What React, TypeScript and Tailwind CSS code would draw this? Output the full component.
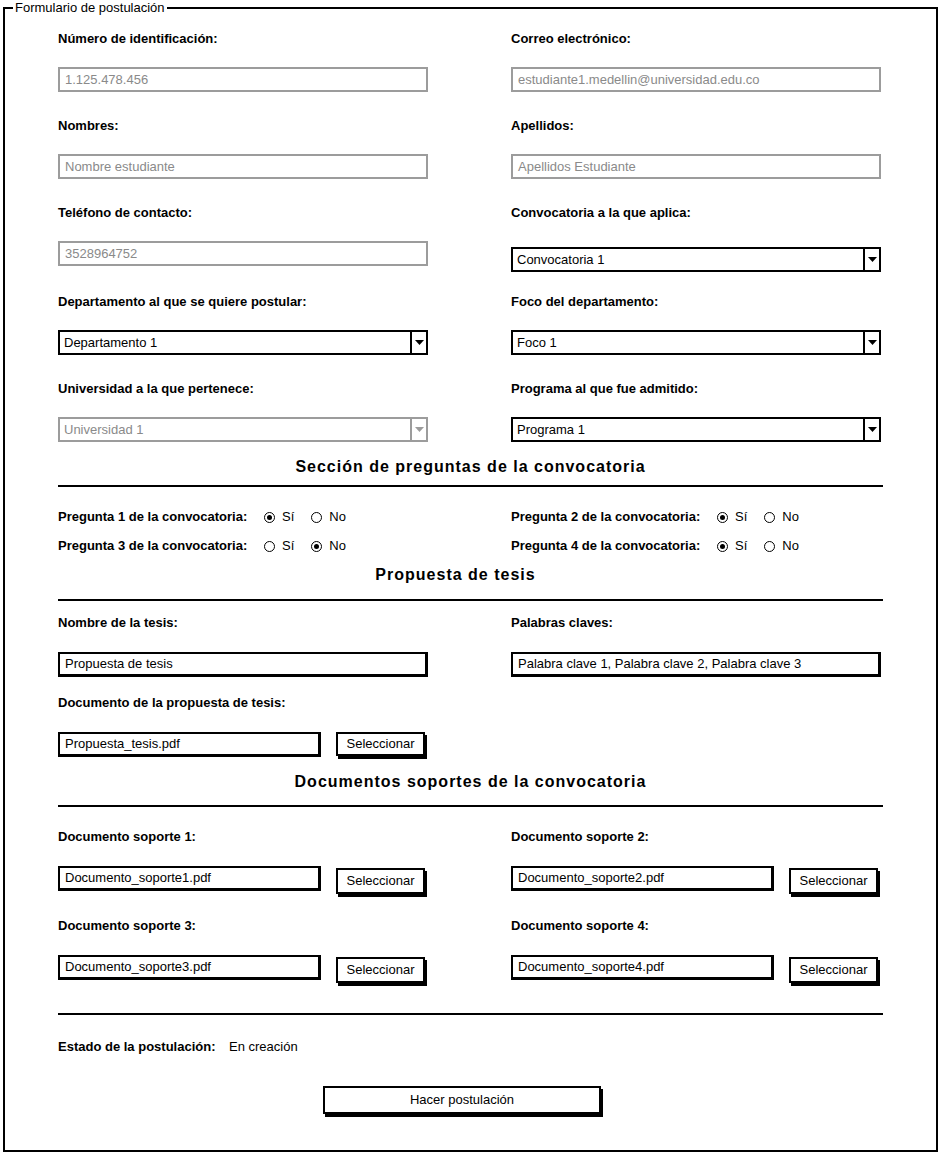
import type { ReactNode } from 'react';

const font = { fontFamily: '"Liberation Sans", Arial, sans-serif' };

function Label({ children }: { children: ReactNode }) {
  return <div className="h-[16px] leading-[16px] text-[13px] font-bold text-black">{children}</div>;
}

function TextBox({ value, disabled, className = '' }: { value: string; disabled?: boolean; className?: string }) {
  return (
    <div
      className={`h-[25px] flex items-center px-[5px] text-[13px] bg-white ${
        disabled ? 'border-2 border-[#9c9c9c] text-[#8a8a8a]' : 'border-2 border-r-[3px] border-b-[3px] border-black text-black'
      } ${className}`}
    >
      {value}
    </div>
  );
}

function Select({ value, disabled, className = '' }: { value: string; disabled?: boolean; className?: string }) {
  const c = disabled ? 'border-[#9c9c9c]' : 'border-black';
  return (
    <div className={`h-[25px] flex border-2 bg-white ${c} ${className}`}>
      <div className={`flex-1 flex items-center px-[4px] text-[13px] ${disabled ? 'text-[#8a8a8a]' : 'text-black'}`}>{value}</div>
      <div className={`w-[16px] border-l-2 ${c} flex items-center justify-center`}>
        <svg width="9" height="5" viewBox="0 0 9 5">
          <polygon points="0,0 9,0 4.5,5" fill={disabled ? '#9c9c9c' : '#000'} />
        </svg>
      </div>
    </div>
  );
}

function Button({ children, className = '' }: { children: ReactNode; className?: string }) {
  return (
    <div
      className={`flex items-center justify-center bg-white border-2 border-black text-[13px] text-black shadow-[2px_3px_0_#000] ${className}`}
    >
      {children}
    </div>
  );
}

function Radio({ checked, label }: { checked?: boolean; label: string }) {
  return (
    <div className="flex items-center">
      <div className="w-[11px] h-[11px] rounded-full border-[1.5px] border-black flex items-center justify-center">
        {checked && <div className="w-[5px] h-[5px] rounded-full bg-black" />}
      </div>
      <span className="ml-[7px] text-[13px] text-black">{label}</span>
    </div>
  );
}

function Question({ label, yes }: { label: string; yes: boolean }) {
  return (
    <div className="flex items-center h-[20px]">
      <div className="w-[206px] text-[13px] font-bold text-black">{label}</div>
      <Radio checked={yes} label="Sí" />
      <div className="w-[17px]" />
      <Radio checked={!yes} label="No" />
    </div>
  );
}

function Heading({ children, className = '' }: { children: ReactNode; className?: string }) {
  return (
    <div className={`h-[20px] leading-[20px] text-center text-[16px] font-bold tracking-[1px] text-black ${className}`}>
      {children}
    </div>
  );
}

function Rule({ className = '' }: { className?: string }) {
  return <div className={`h-[2px] bg-black ${className}`} />;
}

function FileField({ label, file, taller }: { label: string; file: string; taller?: boolean }) {
  return (
    <div>
      <Label>{label}</Label>
      <div className="mt-[21px] flex items-start">
        <TextBox value={file} className="w-[263px]" />
        <Button className={`ml-[15px] w-[89px] ${taller ? 'h-[26px] mt-[2px]' : 'h-[24px]'}`}>Seleccionar</Button>
      </div>
    </div>
  );
}

const row = 'grid grid-cols-[370px_370px] gap-x-[83px]';

export default function App() {
  return (
    <div className="w-[941px] h-[1155px] bg-white" style={font}>
      <fieldset className="ml-[3px] w-[935px] border-2 border-black px-[53px] pb-[36px]">
        <legend className="-ml-[45px] px-[2px] text-[13px] leading-[15px] text-black">Formulario de postulación</legend>

        <div className={`${row} mt-[16px]`}>
          <div>
            <Label>Número de identificación:</Label>
            <TextBox value="1.125.478.456" disabled className="mt-[20px]" />
          </div>
          <div>
            <Label>Correo electrónico:</Label>
            <TextBox value="estudiante1.medellin@universidad.edu.co" disabled className="mt-[20px]" />
          </div>
        </div>

        <div className={`${row} mt-[26px]`}>
          <div>
            <Label>Nombres:</Label>
            <TextBox value="Nombre estudiante" disabled className="mt-[20px]" />
          </div>
          <div>
            <Label>Apellidos:</Label>
            <TextBox value="Apellidos Estudiante" disabled className="mt-[20px]" />
          </div>
        </div>

        <div className={`${row} mt-[26px]`}>
          <div>
            <Label>Teléfono de contacto:</Label>
            <TextBox value="3528964752" disabled className="mt-[20px]" />
          </div>
          <div>
            <Label>Convocatoria a la que aplica:</Label>
            <Select value="Convocatoria 1" className="mt-[26px]" />
          </div>
        </div>

        <div className={`${row} mt-[22px]`}>
          <div>
            <Label>Departamento al que se quiere postular:</Label>
            <Select value="Departamento 1" className="mt-[20px]" />
          </div>
          <div>
            <Label>Foco del departamento:</Label>
            <Select value="Foco 1" className="mt-[20px]" />
          </div>
        </div>

        <div className={`${row} mt-[26px]`}>
          <div>
            <Label>Universidad a la que pertenece:</Label>
            <Select value="Universidad 1" disabled className="mt-[20px]" />
          </div>
          <div>
            <Label>Programa al que fue admitido:</Label>
            <Select value="Programa 1" className="mt-[20px]" />
          </div>
        </div>

        <Heading className="mt-[15px]">Sección de preguntas de la convocatoria</Heading>
        <Rule className="mt-[8px]" />

        <div className={`${row} mt-[20px]`}>
          <Question label="Pregunta 1 de la convocatoria:" yes />
          <Question label="Pregunta 2 de la convocatoria:" yes />
        </div>
        <div className={`${row} mt-[9px]`}>
          <Question label="Pregunta 3 de la convocatoria:" yes={false} />
          <Question label="Pregunta 4 de la convocatoria:" yes />
        </div>

        <Heading className="mt-[9px] pr-[30px]">Propuesta de tesis</Heading>
        <Rule className="mt-[14px]" />

        <div className={`${row} mt-[14px]`}>
          <div>
            <Label>Nombre de la tesis:</Label>
            <TextBox value="Propuesta de tesis" className="mt-[21px]" />
          </div>
          <div>
            <Label>Palabras claves:</Label>
            <TextBox value="Palabra clave 1, Palabra clave 2, Palabra clave 3" className="mt-[21px]" />
          </div>
        </div>

        <div className="mt-[18px]">
          <FileField label="Documento de la propuesta de tesis:" file="Propuesta_tesis.pdf" />
        </div>

        <Heading className="mt-[15px]">Documentos soportes de la convocatoria</Heading>
        <Rule className="mt-[13px]" />

        <div className={`${row} mt-[22px]`}>
          <FileField label="Documento soporte 1:" file="Documento_soporte1.pdf" taller />
          <FileField label="Documento soporte 2:" file="Documento_soporte2.pdf" taller />
        </div>
        <div className={`${row} mt-[24px]`}>
          <FileField label="Documento soporte 3:" file="Documento_soporte3.pdf" taller />
          <FileField label="Documento soporte 4:" file="Documento_soporte4.pdf" taller />
        </div>

        <Rule className="mt-[30px]" />

        <div className="mt-[24px] flex items-center h-[16px] text-[13px] text-black">
          <span className="font-bold w-[171px]">Estado de la postulación:</span>
          <span>En creación</span>
        </div>

        <Button className="mt-[31px] ml-[265px] w-[278px] h-[28px]">Hacer postulación</Button>
      </fieldset>
    </div>
  );
}
